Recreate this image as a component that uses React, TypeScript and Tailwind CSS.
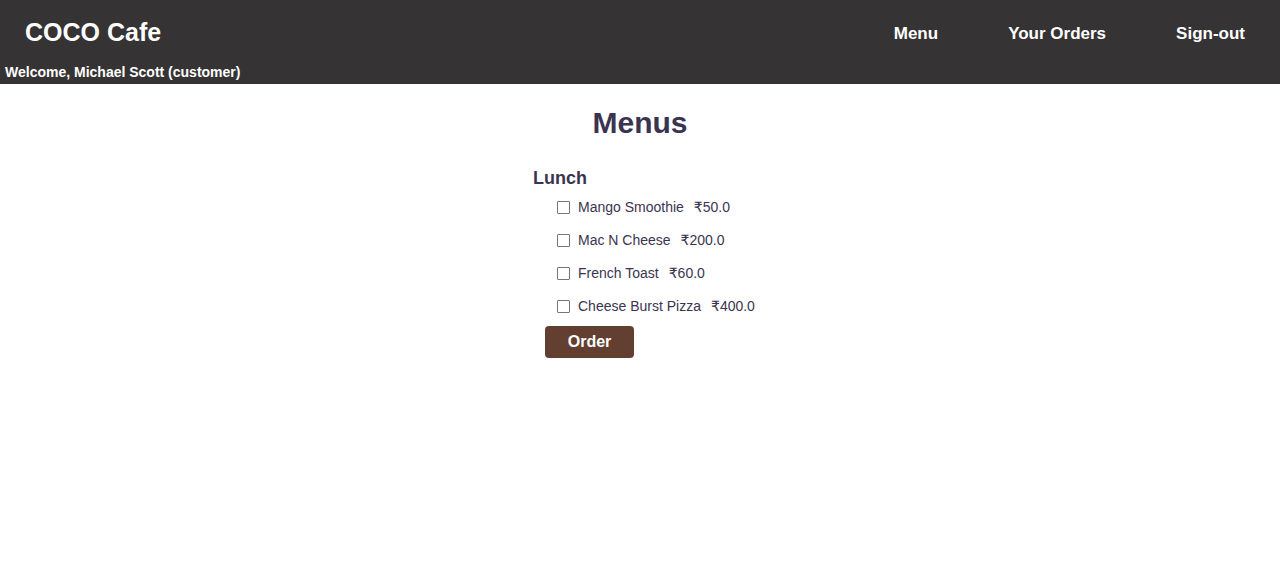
import React, { useState } from "react";

const menuItems = [
  { name: "Mango Smoothie", price: "50.0" },
  { name: "Mac N Cheese", price: "200.0" },
  { name: "French Toast", price: "60.0" },
  { name: "Cheese Burst Pizza", price: "400.0" },
];

const Header = () => (
  <header className="bg-[#353333] text-white h-[84px] flex flex-col">
    <div className="flex items-center justify-between h-[64px] pl-[25px] pt-[2px]">
      <span className="text-[25px] font-bold">COCO Cafe</span>
      <nav className="flex items-center pt-[2px]">
        <a className="px-[35px] text-[17px] font-bold">Menu</a>
        <a className="px-[35px] text-[17px] font-bold">Your Orders</a>
        <a className="px-[35px] text-[17px] font-bold">Sign-out</a>
      </nav>
    </div>
    <div className="pl-[5px] text-[14px] font-bold leading-[16px]">
      Welcome, Michael Scott (customer)
    </div>
  </header>
);

const App = () => {
  const [selected, setSelected] = useState<string[]>([]);

  const toggle = (name: string) => {
    setSelected((prev) =>
      prev.includes(name) ? prev.filter((n) => n !== name) : [...prev, name]
    );
  };

  return (
    <div className="min-h-[579px] bg-white font-['Liberation_Sans',Arial,sans-serif]">
      <Header />
      <main className="text-[#3b3450]">
        <h1 className="text-center text-[30px] font-bold mt-[22px] leading-[34px]">
          Menus
        </h1>
        <div className="pl-[533px] mt-[27px]">
          <h2 className="text-[18px] font-bold leading-[22px]">Lunch</h2>
          <ul className="pl-[24px] mt-[2px]">
            {menuItems.map((item) => (
              <li key={item.name} className="flex items-center h-[33px] text-[14px]">
                <input
                  type="checkbox"
                  className="appearance-none w-[13px] h-[13px] m-0 mr-[8px] border border-[#767676] rounded-[1px] bg-white checked:bg-[#0075ff] checked:border-[#0075ff]"
                  checked={selected.includes(item.name)}
                  onChange={() => toggle(item.name)}
                />
                <span>{item.name}</span>
                <span className="ml-[10px] font-['Liberation_Sans','DejaVu_Sans',sans-serif]">
                  ₹{item.price}
                </span>
              </li>
            ))}
          </ul>
          <button className="ml-[12px] mt-[3px] h-[32px] w-[89px] rounded-[4px] bg-[#623f31] text-white text-[16px] font-bold">
            Order
          </button>
        </div>
      </main>
    </div>
  );
};

export default App;
